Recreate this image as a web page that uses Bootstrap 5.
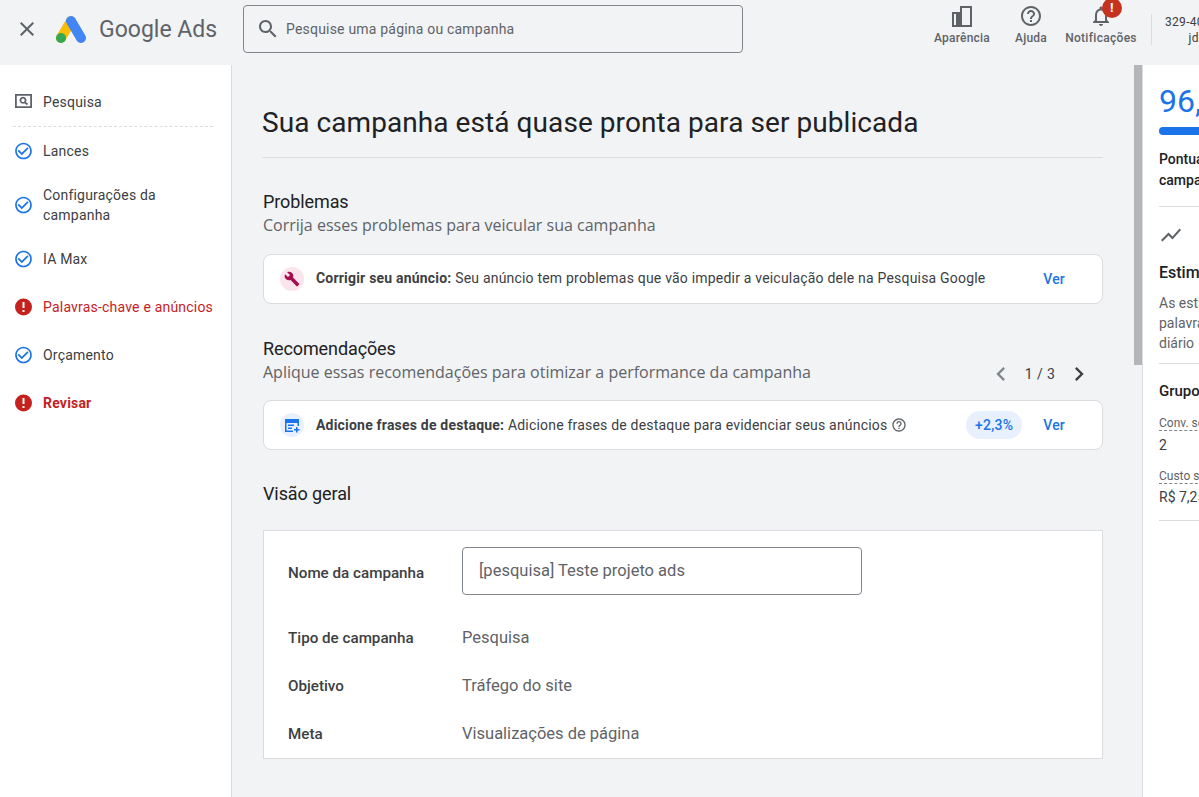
<!DOCTYPE html>
<html lang="pt-BR">
<head>
<meta charset="utf-8">
<meta name="viewport" content="width=device-width, initial-scale=1">
<title>Google Ads</title>
<link href="https://cdn.jsdelivr.net/npm/bootstrap@5.3.3/dist/css/bootstrap.min.css" rel="stylesheet">
<style>
  body { height: 797px; overflow: hidden; background: #f1f3f5; font-family: Roboto, sans-serif; font-size: 14px; color: #3c4043; }
  svg { display: block; flex-shrink: 0; fill: currentColor; }

  .top-bar { height: 65px; padding-bottom: 7px; overflow: hidden; }
  .top-bar > * { flex-shrink: 0; }
  .close-btn { width: 24px; margin-left: 15px; color: #5f6368; }
  .brand { margin-left: 16px; width: 188px; }
  .brand-name { font-size: 23px; color: #5f6368; margin-left: 12px; padding-top: 2px; white-space: nowrap; }
  .search-box { width: 500px; height: 48px; border: 1px solid #80868b; border-radius: 4px; padding-left: 12px; color: #5f6368; margin-right: 184px; letter-spacing: .2px; gap: 6px; }
  .tool { width: 70px; margin-bottom: 9px; font-size: 12px; font-weight: 500; color: #5f6368; white-space: nowrap; letter-spacing: .2px; line-height: 16px; }
  .tool svg { margin-bottom: 2px; }
  .tool-help { margin-left: -1px; }
  .tool-notif { position: relative; letter-spacing: .3px; }
  .alert-dot { position: absolute; top: -6px; left: 36px; width: 20px; height: 20px; border-radius: 50%; background: #c5331f; color: #fff; font-size: 13px; font-weight: 700; line-height: 20px; text-align: center; }
  .account { border-left: 1px solid #dadce0; height: 31px; margin-left: 15px; padding-left: 13px; font-size: 12px; line-height: 16px; text-align: center; letter-spacing: .3px; }

  .side-nav { width: 232px; flex-shrink: 0; background: #fff; border-right: 1px solid #dadce0; padding: 13px 0 0 13px; }
  .step { min-height: 48px; width: 200px; gap: 10px; line-height: 20px; letter-spacing: .2px; color: #3c4043; text-decoration: none; }
  .step.tall { min-height: 60px; }
  .step.first { border-bottom: 1px dashed #dadce0; height: 49px; }
  .step.done svg { color: #1a73e8; }
  .step.bad { color: #c5221f; }
  .step.strong { font-weight: 700; }

  .main-col { width: 902px; flex-shrink: 0; padding: 0 31px; overflow: hidden; }
  .page-title { font-size: 28px; font-weight: 400; color: #202124; line-height: 40px; padding: 38px 0 14px; margin: 0 0 0 -1px; border-bottom: 1px solid #dadce0; letter-spacing: .07px; }
  .sec-title { font-size: 18px; font-weight: 400; color: #202124; line-height: 24px; margin: 0; letter-spacing: -.1px; }
  .sec-sub { font-family: "Open Sans", sans-serif; font-size: 16px; color: #5f6368; line-height: 24px; margin: -1px 0 1px; }
  .notice { height: 50px; border: 1px solid #dadce0; border-radius: 8px; padding: 0 37px 0 16px; letter-spacing: .2px; white-space: nowrap; --bs-card-bg: #fff; }
  .notice b { font-weight: 700; }
  .notice-text { padding-bottom: 2px; }
  .ic-round { width: 24px; height: 24px; border-radius: 50%; margin-right: 12px; }
  .ic-pink { background: #fce4ec; color: #a50e4f; }
  .ic-blue { background: #e8f0fe; color: #1a73e8; }
  .ver { color: #1a73e8; font-weight: 500; text-decoration: none; }
  .lift { background: #e8f0fe; color: #1a73e8; border-radius: 14px; height: 28px; line-height: 28px; padding: 0 9px; font-weight: 500; margin-right: 21px; }
  .pager { color: #3c4043; width: 106px; margin: 0 10px -3px 0; letter-spacing: .4px; }
  .overview { height: 229px; border: 1px solid #dadce0; background: #fff; padding: 16px 0 0 24px; overflow: hidden; }
  .ov-row { height: 48px; }
  .ov-label { width: 174px; font-size: 15.2px; font-weight: 500; color: #3c4043; }
  .ov-value { font-size: 16.5px; color: #5f6368; }
  .ov-input { width: 400px; height: 48px; border: 1px solid #80868b; border-radius: 4px; padding: 0 0 0 16px; font-size: 16.5px; color: #5f6368; }

  .scroll-track { width: 8px; flex-shrink: 0; }
  .scroll-thumb { height: 300px; width: 8px; background: #b4b5b8; }
  .side-panel { flex-grow: 1; background: #fff; border-left: 1px solid #dadce0; padding-left: 16px; overflow: hidden; white-space: nowrap; }
  .panel-inner { width: 240px; }
  .score { font-size: 32px; color: #1a73e8; line-height: 40px; margin-top: 16px; }
  .score-bar { height: 8px; margin-top: 6px; background: #1a73e8; border-radius: 4px; }
  .panel-label { font-weight: 500; color: #202124; line-height: 21px; margin-top: 14px; padding-bottom: 15px; border-bottom: 1px solid #dadce0; }
  .panel-sec { font-size: 16px; font-weight: 500; color: #202124; line-height: 22px; }
  .panel-note { color: #5f6368; line-height: 20px; margin-top: 9px; padding-bottom: 10px; border-bottom: 1px solid #dadce0; }
  .metric-label { font-size: 12px; color: #5f6368; line-height: 14px; border-bottom: 1px dashed #80868b; display: inline-block; }
  .metric-val { line-height: 20px; color: #3c4043; }
  .metric-last { margin-top: 1px; padding-bottom: 13px; border-bottom: 1px solid #dadce0; }
</style>
</head>
<body>

<!-- top bar -->
<header class="top-bar d-flex align-items-center">
  <svg class="close-btn" width="24" height="24" viewBox="0 0 24 24"><path d="M19 6.41L17.59 5 12 10.59 6.41 5 5 6.41 10.59 12 5 17.59 6.41 19 12 13.41 17.59 19 19 17.59 13.41 12z"/></svg>
  <div class="brand d-flex align-items-center">
    <svg width="32" height="30" viewBox="0 0 32 30">
      <line x1="16" y1="7" x2="6" y2="24" stroke="#fbbc04" stroke-width="10" stroke-linecap="round"/>
      <circle cx="6" cy="24" r="5" fill="#34a853"/>
      <line x1="16" y1="7" x2="26" y2="24" stroke="#4285f4" stroke-width="10" stroke-linecap="round"/>
    </svg>
    <span class="brand-name">Google Ads</span>
  </div>
  <div class="search-box d-flex align-items-center">
    <svg width="24" height="24" viewBox="0 0 24 24"><path d="M15.5 14h-.79l-.28-.27C15.41 12.59 16 11.11 16 9.5 16 5.91 13.09 3 9.5 3S3 5.91 3 9.5 5.91 16 9.5 16c1.61 0 3.09-.59 4.23-1.57l.27.28v.79l5 4.99L20.49 19l-4.99-5zm-6 0C7.01 14 5 11.99 5 9.5S7.01 5 9.5 5 14 7.01 14 9.5 11.99 14 9.5 14z"/></svg>
    <span>Pesquise uma página ou campanha</span>
  </div>
  <div class="tool d-flex flex-column align-items-center">
    <svg width="24" height="24" viewBox="0 0 24 24"><path fill-rule="evenodd" d="M2 8h8V2h12v21H2zM4 10v11h2V10zM12 4v17h8V4z"/></svg>
    <span>Aparência</span>
  </div>
  <div class="tool tool-help d-flex flex-column align-items-center">
    <svg width="24" height="24" viewBox="0 0 24 24"><path d="M11 18h2v-2h-2v2zm1-16C6.48 2 2 6.48 2 12s4.48 10 10 10 10-4.48 10-10S17.52 2 12 2zm0 18c-4.41 0-8-3.59-8-8s3.59-8 8-8 8 3.59 8 8-3.59 8-8 8zm0-14c-2.21 0-4 1.79-4 4h2c0-1.1.9-2 2-2s2 .9 2 2c0 2-3 1.75-3 5h2c0-2.25 3-2.5 3-5 0-2.21-1.79-4-4-4z"/></svg>
    <span>Ajuda</span>
  </div>
  <div class="tool tool-notif d-flex flex-column align-items-center">
    <svg width="24" height="24" viewBox="0 0 24 24"><path d="M12 22c1.1 0 2-.9 2-2h-4c0 1.1.9 2 2 2zm6-6v-5c0-3.07-1.63-5.64-4.5-6.32V4c0-.83-.67-1.5-1.5-1.5s-1.5.67-1.5 1.5v.68C7.64 5.36 6 7.92 6 11v5l-2 2v1h16v-1l-2-2zm-2 1H8v-6c0-2.48 1.51-4.5 4-4.5s4 2.02 4 4.5v6z"/></svg>
    <span>Notificações</span>
    <span class="alert-dot">!</span>
  </div>
  <div class="account">329-407-5120<br>jdoes</div>
</header>

<div class="d-flex" style="height:732px">
  <!-- steps -->
  <nav class="side-nav">
    <a class="step first d-flex align-items-center" href="#">
      <svg width="20" height="20" viewBox="0 1 20 20" style="color:#5f6368"><path fill-rule="evenodd" d="M2 3h17v14H2zM3.800 4.800v10.400h13.400V4.800z"/><path fill="none" stroke="currentColor" stroke-width="1.800" d="M10 6.700a2.600 2.600 0 1 0 .01 0zM12 11.500l2.500 2"/></svg>
      <span>Pesquisa</span>
    </a>
    <a class="step done d-flex align-items-center" href="#">
      <svg width="20" height="20" viewBox="-.6 0 24 24"><path d="M16.59 7.58L10 14.170l-3.590-3.580L5 12l5 5 8-8zM12 2C6.480 2 2 6.480 2 12s4.480 10 10 10 10-4.480 10-10S17.520 2 12 2zm0 18c-4.420 0-8-3.580-8-8s3.580-8 8-8 8 3.580 8 8-3.580 8-8 8z"/></svg>
      <span>Lances</span>
    </a>
    <a class="step tall done d-flex align-items-center" href="#">
      <svg width="20" height="20" viewBox="-.6 0 24 24"><path d="M16.59 7.58L10 14.170l-3.590-3.580L5 12l5 5 8-8zM12 2C6.480 2 2 6.480 2 12s4.480 10 10 10 10-4.480 10-10S17.520 2 12 2zm0 18c-4.420 0-8-3.580-8-8s3.580-8 8-8 8 3.580 8 8-3.580 8-8 8z"/></svg>
      <span>Configurações da<br>campanha</span>
    </a>
    <a class="step done d-flex align-items-center" href="#">
      <svg width="20" height="20" viewBox="-.6 0 24 24"><path d="M16.59 7.58L10 14.170l-3.590-3.580L5 12l5 5 8-8zM12 2C6.480 2 2 6.480 2 12s4.480 10 10 10 10-4.480 10-10S17.520 2 12 2zm0 18c-4.420 0-8-3.580-8-8s3.580-8 8-8 8 3.580 8 8-3.580 8-8 8z"/></svg>
      <span>IA Max</span>
    </a>
    <a class="step bad d-flex align-items-center" href="#">
      <svg width="20" height="20" viewBox="-1.500 -1 20 20"><circle cx="9" cy="9" r="8.500" fill="#c5221f"/><path fill="#fff" d="M8 4h2v6H8zM8 12h2v2H8z"/></svg>
      <span class="text-nowrap">Palavras-chave e anúncios</span>
    </a>
    <a class="step done d-flex align-items-center" href="#">
      <svg width="20" height="20" viewBox="-.6 0 24 24"><path d="M16.59 7.58L10 14.170l-3.590-3.580L5 12l5 5 8-8zM12 2C6.480 2 2 6.480 2 12s4.480 10 10 10 10-4.480 10-10S17.520 2 12 2zm0 18c-4.420 0-8-3.580-8-8s3.580-8 8-8 8 3.580 8 8-3.580 8-8 8z"/></svg>
      <span>Orçamento</span>
    </a>
    <a class="step bad strong d-flex align-items-center" href="#">
      <svg width="20" height="20" viewBox="-1.500 -1 20 20"><circle cx="9" cy="9" r="8.500" fill="#c5221f"/><path fill="#fff" d="M8 4h2v6H8zM8 12h2v2H8z"/></svg>
      <span>Revisar</span>
    </a>
  </nav>

  <!-- main -->
  <main class="main-col">
    <h1 class="page-title">Sua campanha está quase pronta para ser publicada</h1>

    <h2 class="sec-title" style="margin-top:32px">Problemas</h2>
    <div class="sec-sub">Corrija esses problemas para veicular sua campanha</div>
    <div class="card notice flex-row align-items-center" style="margin-top:17px">
      <span class="ic-round ic-pink d-flex align-items-center justify-content-center">
        <svg width="16" height="16" viewBox="0 0 24 24"><path d="M22.7 19l-9.100-9.100c.9-2.300.4-5-1.500-6.900-2-2-5-2.400-7.400-1.300L9 6 6 9 1.600 4.700C.4 7.100.9 10.100 2.900 12.100c1.900 1.900 4.600 2.400 6.900 1.500l9.100 9.100c.4.4 1 .4 1.400 0l2.300-2.300c.5-.4.5-1.100.1-1.400z"/></svg>
      </span>
      <span class="flex-grow-1 notice-text"><b>Corrigir seu anúncio:</b> Seu anúncio tem problemas que vão impedir a veiculação dele na Pesquisa Google</span>
      <a class="ver" href="#">Ver</a>
    </div>

    <div class="d-flex justify-content-between align-items-end" style="margin-top:33px">
      <div>
        <h2 class="sec-title">Recomendações</h2>
        <div class="sec-sub">Aplique essas recomendações para otimizar a performance da campanha</div>
      </div>
      <div class="pager d-flex align-items-center justify-content-between">
        <svg width="28" height="28" viewBox="0 0 24 24" style="color:#80868b"><path d="M15.410 7.410L14 6l-6 6 6 6 1.410-1.410L10.830 12z"/></svg>
        <span>1 / 3</span>
        <svg width="28" height="28" viewBox="0 0 24 24"><path d="M10 6L8.590 7.410 13.170 12l-4.580 4.590L10 18l6-6z"/></svg>
      </div>
    </div>
    <div class="card notice flex-row align-items-center" style="margin-top:15px">
      <span class="ic-round ic-blue d-flex align-items-center justify-content-center">
        <svg width="16" height="16" viewBox="0 0 16 16"><path fill-rule="evenodd" d="M1 2h14v7h-1.500V6h-11v7.500H9V15H1z"/><path d="M4 7.500h6V9H4zM4 10.500h4V12H4zM12 10h1.500v2H15.500v1.500h-2v2H12v-2h-2V12h2z"/></svg>
      </span>
      <span><b>Adicione frases de destaque:</b> Adicione frases de destaque para evidenciar seus anúncios</span>
      <svg class="ms-1 me-auto" width="16" height="16" viewBox="0 0 24 24" style="color:#5f6368"><path d="M11 18h2v-2h-2v2zm1-16C6.480 2 2 6.480 2 12s4.480 10 10 10 10-4.480 10-10S17.520 2 12 2zm0 18c-4.410 0-8-3.590-8-8s3.590-8 8-8 8 3.590 8 8-3.590 8-8 8zm0-14c-2.210 0-4 1.790-4 4h2c0-1.100.9-2 2-2s2 .9 2 2c0 2-3 1.750-3 5h2c0-2.250 3-2.500 3-5 0-2.210-1.790-4-4-4z"/></svg>
      <span class="lift">+2,3%</span>
      <a class="ver" href="#">Ver</a>
    </div>

    <h2 class="sec-title" style="margin:32px 0 24px">Visão geral</h2>
    <section class="overview">
      <div class="d-flex align-items-center" style="margin-bottom:19px">
        <div class="ov-label" style="padding-top:4px">Nome da campanha</div>
        <div class="ov-input d-flex align-items-center">[pesquisa] Teste projeto ads</div>
      </div>
      <div class="ov-row d-flex align-items-center"><div class="ov-label">Tipo de campanha</div><div class="ov-value">Pesquisa</div></div>
      <div class="ov-row d-flex align-items-center"><div class="ov-label">Objetivo</div><div class="ov-value">Tráfego do site</div></div>
      <div class="ov-row d-flex align-items-center"><div class="ov-label">Meta</div><div class="ov-value">Visualizações de página</div></div>
    </section>
  </main>

  <div class="scroll-track"><div class="scroll-thumb"></div></div>

  <!-- right panel, runs past the window edge -->
  <aside class="side-panel">
    <div class="panel-inner">
      <div class="score">96,2%</div>
      <div class="score-bar"></div>
      <div class="panel-label">Pontuação de otimização da<br>campanha</div>
      <svg class="mt-3" style="color:#5f6368" width="24" height="24" viewBox="0 0 24 24"><path d="M3.500 18.490l6-6.010 4 4L22 6.920l-1.410-1.410-7.090 7.970-4-4L2 16.990z"/></svg>
      <div class="panel-sec" style="margin-top:15px">Estimativas semanais</div>
      <div class="panel-note">As estimativas usam as<br>palavras-chave e o orçamento<br>diário</div>
      <div class="panel-sec" style="margin-top:16px;font-size:15px">Grupos de anúncios</div>
      <div style="margin-top:10px"><span class="metric-label">Conv. semanais</span></div>
      <div class="metric-val" style="margin-top:2px">2</div>
      <div style="margin-top:10px"><span class="metric-label">Custo semanal</span></div>
      <div class="metric-val metric-last">R$ 7,25</div>
    </div>
  </aside>
</div>

<script src="https://cdn.jsdelivr.net/npm/bootstrap@5.3.3/dist/js/bootstrap.bundle.min.js"></script>
</body>
</html>
